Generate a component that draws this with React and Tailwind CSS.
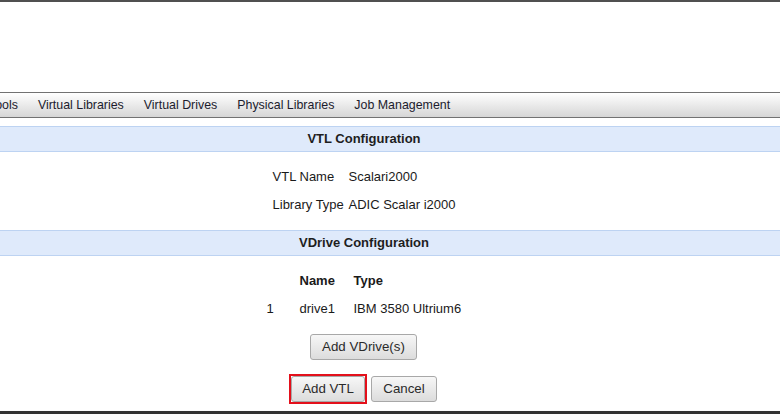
import React from 'react';

const navItems = ['Tools', 'Virtual Libraries', 'Virtual Drives', 'Physical Libraries', 'Job Management'];

const SectionHeader = ({ title, className = '' }) => (
  <div className={`h-[26px] border-y border-[#bdd3f2] bg-[#dfeafb] flex items-center justify-center text-[13px] font-bold text-[#1e1e1e] ${className}`}>
    {title}
  </div>
);

const GrayButton = ({ children, className = '' }) => (
  <button
    type="button"
    className={`h-[26px] rounded-[3px] border border-[#a8a8a8] bg-gradient-to-b from-[#f7f7f7] to-[#dcdcdc] text-[13.3px] text-[#2a2a2a] ${className}`}
  >
    {children}
  </button>
);

const App = () => {
  return (
    <div className="w-[780px] h-[414px] overflow-hidden bg-white flex flex-col" style={{ fontFamily: '"Liberation Sans", Arial, sans-serif' }}>
      <div className="h-[2px] bg-[#505050] shrink-0" />
      <div className="h-[90px] shrink-0" />

      <div className="ml-[-52px] w-[832px] flex flex-col shrink-0">
        {/* top menu, scrolled so the first item is cut */}
        <div className="h-[26px] border-y border-[#727272] bg-gradient-to-b from-white to-[#d6d6d6] flex items-center gap-[20px] pl-[41px] text-[12.4px] text-[#1c1c2e]">
          {navItems.map(item => (
            <span key={item}>{item}</span>
          ))}
        </div>

        <SectionHeader title="VTL Configuration" className="mt-[8px]" />

        <div className="mt-[10px] flex justify-center text-[13px] text-[#1a1a1a]">
          <div className="grid grid-cols-[76px_auto] pt-[1px]">
            <div className="h-[28px] flex items-center">VTL Name</div>
            <div className="h-[28px] flex items-center">Scalari2000</div>
            <div className="h-[28px] flex items-center">Library Type</div>
            <div className="h-[28px] flex items-center">ADIC Scalar i2000</div>
          </div>
        </div>

        <SectionHeader title="VDrive Configuration" className="mt-[11px]" />

        <div className="mt-[10px] flex justify-center text-[13px] text-[#1a1a1a]">
          <div className="grid grid-cols-[33px_54px_108px] pt-[1px]">
            <div className="h-[28px]" />
            <div className="h-[28px] flex items-center font-bold">Name</div>
            <div className="h-[28px] flex items-center font-bold">Type</div>
            <div className="h-[28px] flex items-center">1</div>
            <div className="h-[28px] flex items-center">drive1</div>
            <div className="h-[28px] flex items-center whitespace-nowrap">IBM 3580 Ultrium6</div>
          </div>
        </div>

        <div className="mt-[11px] flex justify-center pr-[1px]">
          <GrayButton className="w-[107px]">Add VDrive(s)</GrayButton>
        </div>

        <div className="mt-[14px] flex justify-center items-center gap-[4px] pr-[2px]">
          <div className="border-2 border-[#e3101b]">
            <GrayButton className="w-[74px] block">Add VTL</GrayButton>
          </div>
          <GrayButton className="w-[66px]">Cancel</GrayButton>
        </div>
      </div>

      <div className="flex-1" />
      <div className="h-[3px] bg-[#333333] shrink-0" />
    </div>
  );
};

export default App;
